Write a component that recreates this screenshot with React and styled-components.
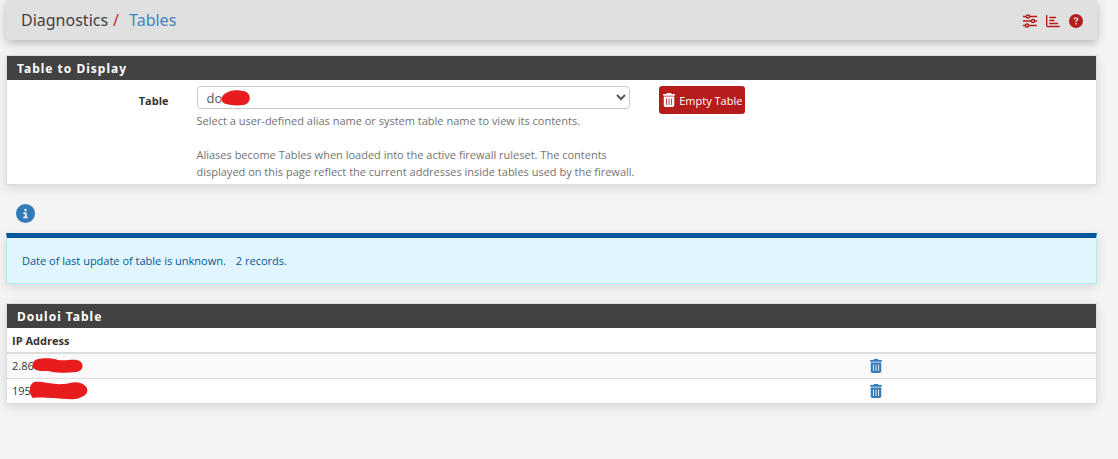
import React, { useState } from 'react'
import styled, { createGlobalStyle } from 'styled-components'
import { FaCircleInfo, FaCircleQuestion, FaTrashCan } from 'react-icons/fa6'

const GlobalStyle = createGlobalStyle`
  * {
    box-sizing: border-box;
  }
  body {
    margin: 0;
    background-color: #f4f4f4;
    color: #333;
    font-family: "Open Sans", "Noto Sans", sans-serif;
    font-size: 11px;
    line-height: 17px;
  }
`

const Page = styled.div`
  padding: 0 21px 24px 6px;
`
const Header = styled.header`
  display: flex;
  align-items: center;
  justify-content: space-between;
  height: 40px;
  padding: 0 14px 0 15px;
  background-color: #e0e0e0;
  border-radius: 0 0 3px 3px;
  box-shadow: 0 3px 10px rgba(0, 0, 0, 0.25);
`
const Breadcrumb = styled.nav`
  display: flex;
  gap: 5px;
  font-family: "Noto Sans", sans-serif;
  font-size: 16px;
  line-height: 24px;
  color: #424242;
`
const Slash = styled.span`
  margin-right: 5px;
  color: #c62828;
`
const Crumb = styled.a`
  color: #4285c0;
  text-decoration: none;
`
const HeaderIcons = styled.div`
  display: flex;
  align-items: center;
  gap: 9px;
  padding-top: 2px;
`
const IconLink = styled.a`
  display: flex;
  color: ${props => props.$color || '#b71c1c'};
`
const Panel = styled.section`
  margin-top: ${props => props.$top}px;
  background-color: #fff;
  border: 1px solid #ddd;
  box-shadow: 0 3px 10px rgba(0, 0, 0, 0.12);
`
const PanelHeading = styled.h2`
  margin: 0;
  padding: 1px 10px 0;
  background-color: #424242;
  color: #fff;
  font-family: "Noto Sans", sans-serif;
  font-size: 12px;
  font-weight: 700;
  line-height: 23px;
  letter-spacing: 1px;
`
const FormRow = styled.form`
  display: grid;
  grid-template-columns: 2fr 5fr 5fr;
  padding: 6px 0 4px;
`
const Label = styled.label`
  padding: 6px 20px 0 0;
  text-align: right;
  font-weight: 700;
`
const Field = styled.div`
  position: relative;
  padding: 0 12px 0 8px;
`
const Select = styled.select`
  display: block;
  width: 100%;
  height: 23px;
  padding: 0 5px;
  background-color: #fff;
  border: 1px solid #ccc;
  border-radius: 4px;
  color: #555;
  font-family: inherit;
  font-size: 13px;
`
const Help = styled.p`
  margin: 3px -8px 0 0;
  color: #737373;
`
const Actions = styled.div`
  padding-left: 17px;
`
const DangerButton = styled.button`
  display: flex;
  align-items: center;
  gap: 3px;
  height: 28px;
  padding: 0 3px;
  background-color: #b71c1c;
  border: 0;
  border-radius: 3px;
  color: #fff;
  font-family: inherit;
  font-size: 11px;
`
const InfoButton = styled.button`
  display: flex;
  margin: 19px 0 10px 10px;
  padding: 0;
  background: none;
  border: 0;
  color: #337ab7;
`
const Alert = styled.div`
  padding: 14px 15px;
  background-color: #e1f5fe;
  border: 1px solid #b2ebf2;
  border-top: 5px solid #01579b;
  box-shadow: 0 3px 10px rgba(0, 0, 0, 0.12);
  color: #01579b;
`
const Records = styled.span`
  margin-left: 10px;
`
const DataTable = styled.table`
  width: 100%;
  border-collapse: collapse;
  table-layout: fixed;
`
const HeadCell = styled.th`
  width: ${props => props.$width};
  height: 25px;
  padding: 0 5px;
  border-bottom: 2px solid #ddd;
  text-align: left;
`
const Row = styled.tr`
  background-color: ${props => (props.$odd ? '#f9f9f9' : '#fff')};
`
const Cell = styled.td`
  height: 25px;
  padding: 0 5px;
  border-top: 1px solid #ddd;
`
const CellContent = styled.div`
  display: flex;
  align-items: center;
  height: 17px;
`
const Scribble = styled.svg`
  display: block;
  flex: none;
  margin-left: -2px;
`
const SelectScribble = styled.svg`
  position: absolute;
  top: 4px;
  left: 32px;
  pointer-events: none;
`

const SlidersIcon = () => (
  <svg width="14" height="14" viewBox="0 0 14 14" fill="none" stroke="currentColor" strokeWidth="1.5">
    <path d="M0 2.5H3.5M6.5 2.5H14M0 7H8.5M11.5 7H14M0 11.5H2.5M5.5 11.5H14" />
    <circle cx="5" cy="2.5" r="1.6" />
    <circle cx="10" cy="7" r="1.6" />
    <circle cx="4" cy="11.5" r="1.6" />
  </svg>
)

const ChartIcon = () => (
  <svg width="14" height="14" viewBox="0 0 14 14" fill="none" stroke="currentColor" strokeLinecap="round">
    <path strokeWidth="1.4" d="M0.7 1.5V11.5Q0.7 12.5 1.7 12.5H13.3" />
    <path strokeWidth="1.4" d="M3.8 3.5H9.5M3.8 6.5H7.8M3.8 9.5H11.5" />
  </svg>
)

const entries = [
  {
    ip: '2.86',
    width: 51,
    height: 15,
    mark: 'M6 1C12 0 21 0 26 2C33 3 40 1 45 2C53 4 52 13 44 14C36 15 27 15 20 14C18 12 9 14 4 12C-1 10 -1 3 6 1Z',
  },
  {
    ip: '195',
    width: 59,
    height: 19,
    mark: 'M5 1C13 0 25 4 34 3C41 3 45 0 51 2C61 5 61 14 50 17C43 20 32 17 24 17C18 17 12 16 4 17C0 14 -1 4 5 1Z',
  },
]

const App = () => {
  const [table, setTable] = useState('do')

  return (
    <>
      <GlobalStyle />
      <Page>
        <Header>
          <Breadcrumb>
            <span>Diagnostics</span>
            <Slash>/</Slash>
            <Crumb href="#tables">Tables</Crumb>
          </Breadcrumb>
          <HeaderIcons>
            <IconLink href="#settings" aria-label="Settings"><SlidersIcon /></IconLink>
            <IconLink href="#status" aria-label="Status"><ChartIcon /></IconLink>
            <IconLink href="#help" aria-label="Help"><FaCircleQuestion size={14} /></IconLink>
          </HeaderIcons>
        </Header>

        <Panel $top={15}>
          <PanelHeading>Table to Display</PanelHeading>
          <FormRow onSubmit={e => e.preventDefault()}>
            <Label htmlFor="table">Table</Label>
            <Field>
              <Select id="table" value={table} onChange={e => setTable(e.target.value)}>
                <option value="do">do</option>
              </Select>
              <SelectScribble width="29" height="16" viewBox="0 0 29 16">
                <path d="M7 2C11 0 18 0 22 1C31 2 31 14 22 15C16 16 9 15 5 14C-1 13 -1 5 7 2Z" fill="#e81c1c" />
              </SelectScribble>
              <Help>
                Select a user-defined alias name or system table name to view its contents.
                <br />
                <br />
                Aliases become Tables when loaded into the active firewall ruleset. The contents
                displayed on this page reflect the current addresses inside tables used by the firewall.
              </Help>
            </Field>
            <Actions>
              <DangerButton type="button">
                <FaTrashCan size={14} />
                Empty Table
              </DangerButton>
            </Actions>
          </FormRow>
        </Panel>

        <InfoButton type="button" aria-label="Information">
          <FaCircleInfo size={19} />
        </InfoButton>
        <Alert>
          Date of last update of table is unknown.
          <Records>2 records.</Records>
        </Alert>

        <Panel $top={19}>
          <PanelHeading>Douloi Table</PanelHeading>
          <DataTable>
            <thead>
              <tr>
                <HeadCell>IP Address</HeadCell>
                <HeadCell $width="232px" aria-label="Actions" />
              </tr>
            </thead>
            <tbody>
              {entries.map((entry, i) => (
                <Row key={entry.ip} $odd={i % 2 === 0}>
                  <Cell>
                    <CellContent>
                      {entry.ip}
                      <Scribble width={entry.width} height={entry.height}>
                        <path d={entry.mark} fill="#e81c1c" />
                      </Scribble>
                    </CellContent>
                  </Cell>
                  <Cell>
                    <IconLink href="#delete" aria-label="Delete entry" $color="#337ab7">
                      <FaTrashCan size={14} />
                    </IconLink>
                  </Cell>
                </Row>
              ))}
            </tbody>
          </DataTable>
        </Panel>
      </Page>
    </>
  )
}

export default App
